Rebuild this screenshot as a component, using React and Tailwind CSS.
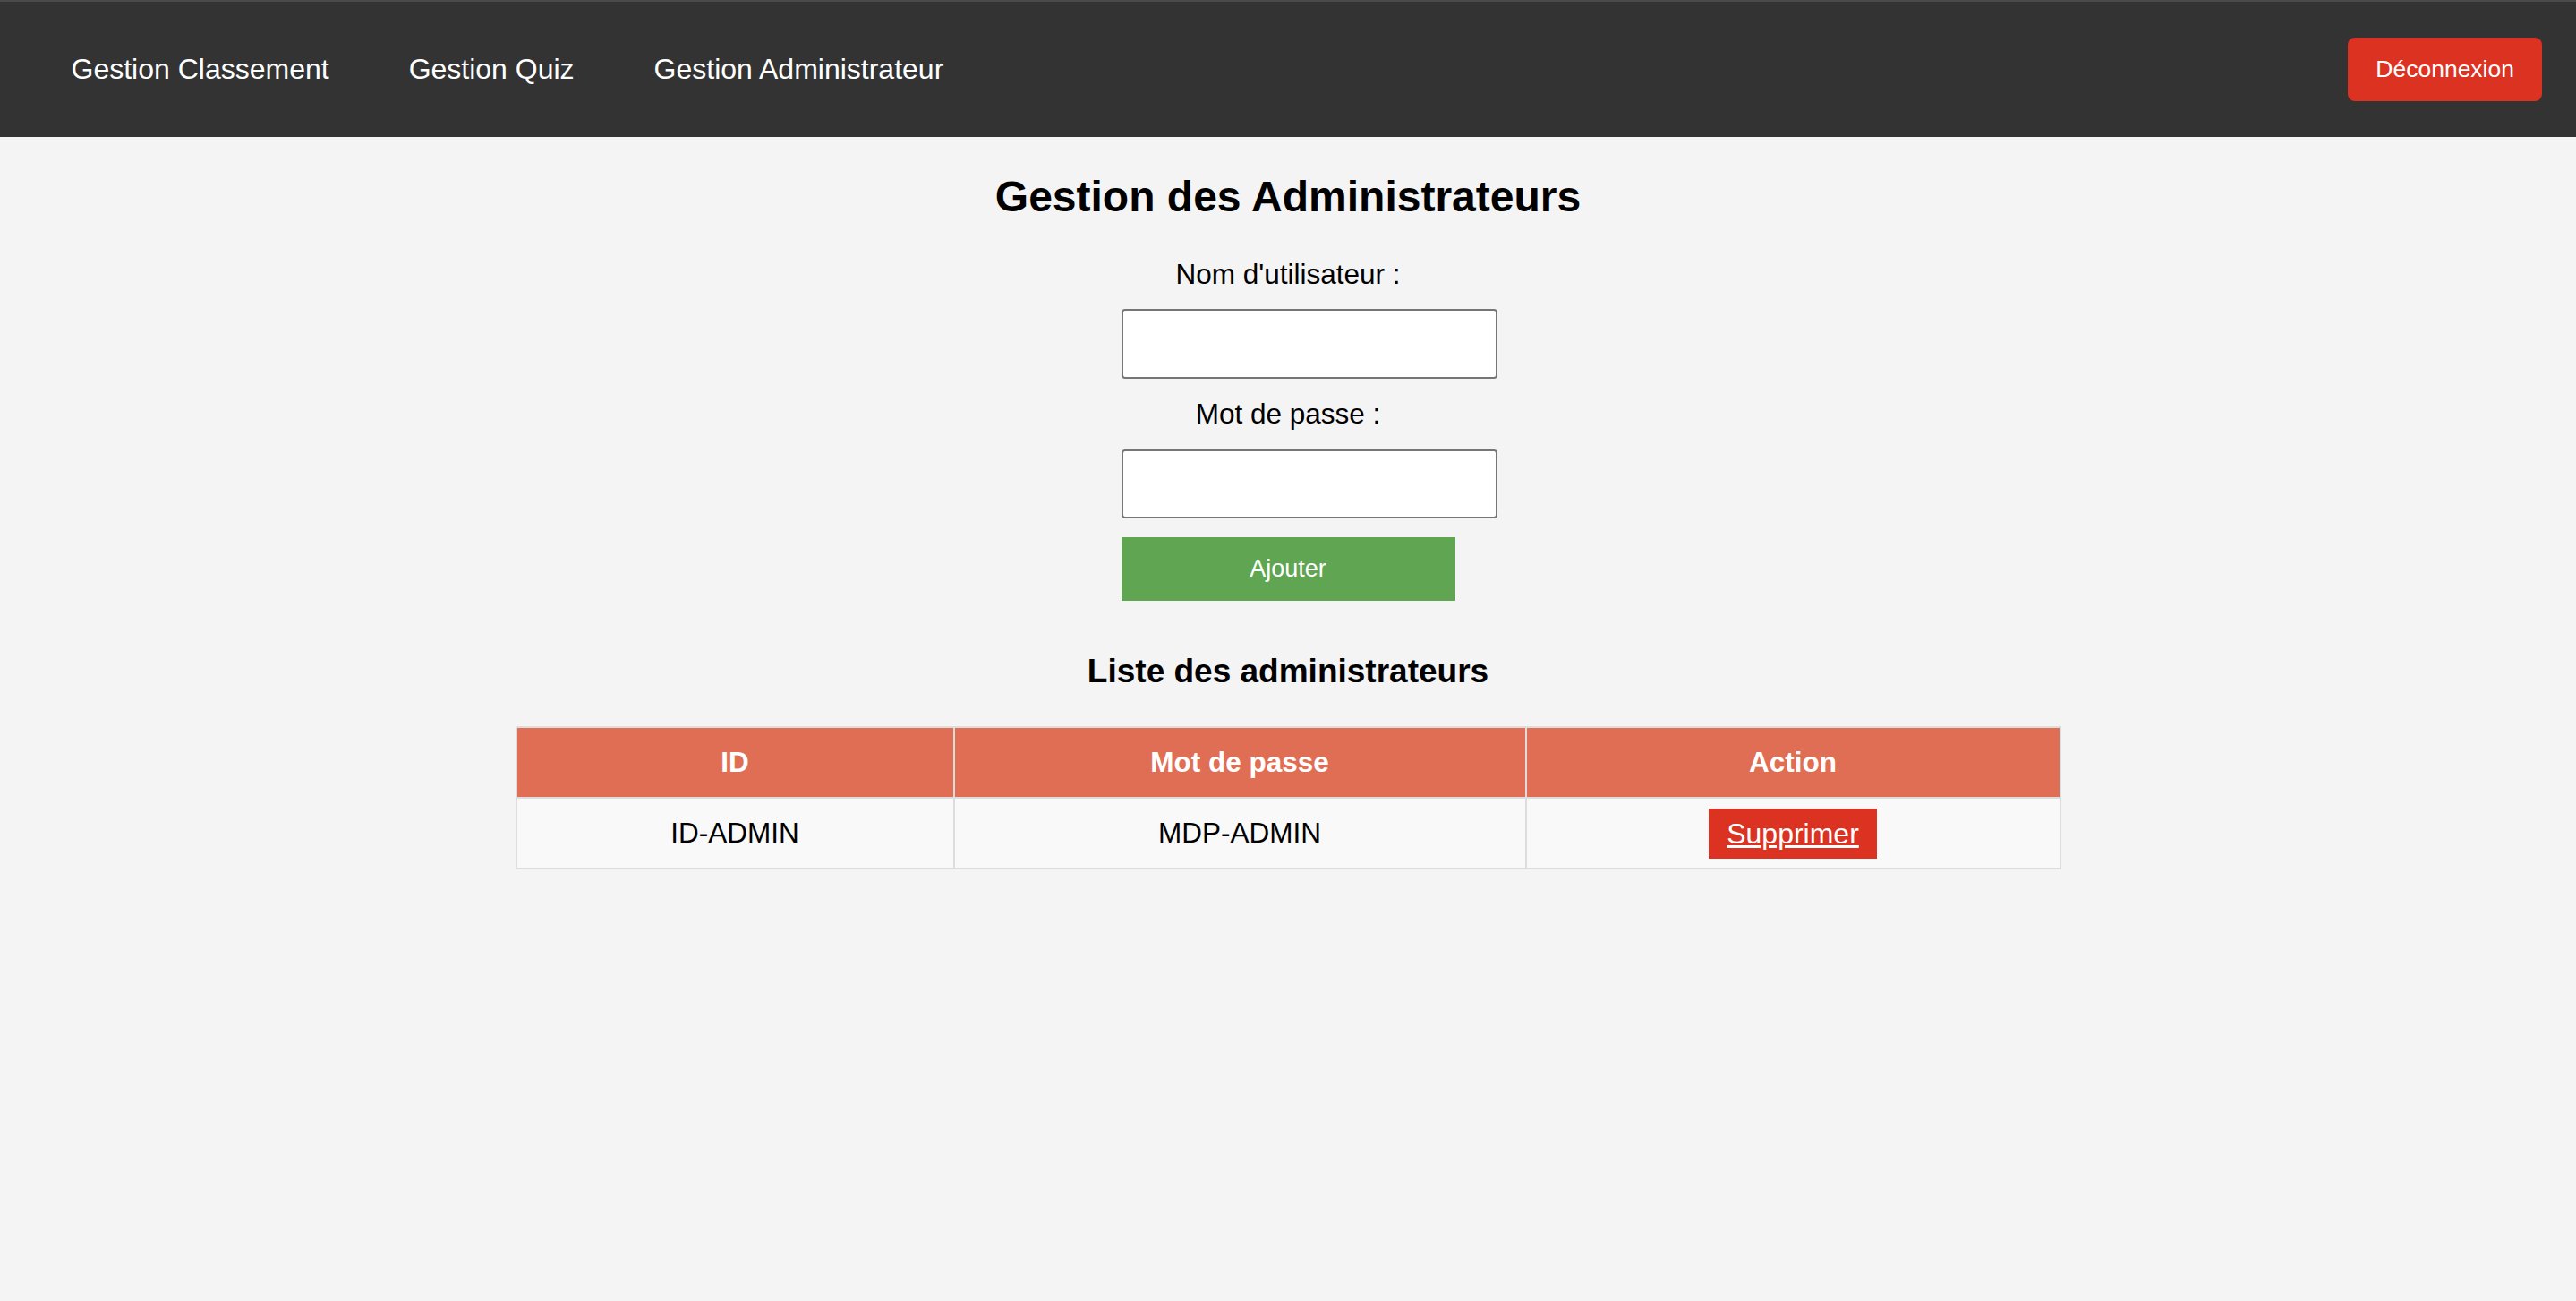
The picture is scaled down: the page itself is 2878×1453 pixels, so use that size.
import React from "react";

const font = { fontFamily: '"Liberation Sans", Arial, Helvetica, sans-serif' };

const navLinks = ["Gestion Classement", "Gestion Quiz", "Gestion Administrateur"];

const admins = [{ id: "ID-ADMIN", mdp: "MDP-ADMIN" }];

function NavBar() {
  return (
    <nav className="flex items-center justify-between bg-[#333333] border-t-2 border-[#4a4a4a] h-[153px] pl-[35px] pr-[38px]">
      <ul className="flex items-center">
        {navLinks.map((l) => (
          <li key={l}>
            <a href="#" className="block px-[44.5px] text-[32px] leading-[37px] text-white">
              {l}
            </a>
          </li>
        ))}
      </ul>
      <button className="bg-[#dc3222] text-white text-[26.5px] leading-[31px] px-[31px] py-[20px] rounded-[8px]">
        Déconnexion
      </button>
    </nav>
  );
}

function AdminForm() {
  return (
    <div className="flex flex-col items-center">
      <h2 className="text-[48px] leading-[56px] font-bold text-black">Gestion des Administrateurs</h2>

      <div className="w-[373px] flex flex-col items-center mt-[40px]">
        <label className="text-[31.5px] leading-[36px] text-black">Nom d'utilisateur :</label>
        <input
          type="text"
          className="self-start mt-[21px] w-[420px] h-[78px] bg-white border-2 border-[#767676] rounded-[4px] shrink-0"
        />
        <label className="mt-[21px] text-[31.5px] leading-[36px] text-black">Mot de passe :</label>
        <input
          type="password"
          className="self-start mt-[22px] w-[420px] h-[77px] bg-white border-2 border-[#767676] rounded-[4px] shrink-0"
        />
        <button className="mt-[21px] w-[373px] h-[71px] bg-[#5fa552] text-white text-[27px]">Ajouter</button>
      </div>
    </div>
  );
}

function AdminTable() {
  return (
    <div className="flex flex-col items-center mt-[57px]">
      <h3 className="text-[37px] leading-[43px] font-bold text-black">Liste des administrateurs</h3>
      <table className="mt-[40px] w-[1727px] border-collapse border-2 border-[#dddddd]">
        <thead>
          <tr className="bg-[#e06e55] text-white">
            <th className="w-[489px] h-[79px] border-2 border-[#dddddd] text-[31.5px] font-bold">ID</th>
            <th className="w-[639px] h-[79px] border-2 border-[#dddddd] text-[31.5px] font-bold">Mot de passe</th>
            <th className="h-[79px] border-2 border-[#dddddd] text-[31.5px] font-bold">Action</th>
          </tr>
        </thead>
        <tbody>
          {admins.map((a) => (
            <tr key={a.id} className="bg-[#f9f9f9]">
              <td className="h-[79px] border-2 border-[#dddddd] text-center text-[31.5px] text-black">{a.id}</td>
              <td className="h-[79px] border-2 border-[#dddddd] text-center text-[31.5px] text-black">{a.mdp}</td>
              <td className="h-[79px] border-2 border-[#dddddd] text-center">
                <a href="#" className="inline-block bg-[#dc3222] text-white underline text-[32px] leading-[36px] px-[20px] py-[10px]">
                  Supprimer
                </a>
              </td>
            </tr>
          ))}
        </tbody>
      </table>
    </div>
  );
}

export default function App() {
  return (
    <div className="min-h-screen bg-[#f4f4f4]" style={font}>
      <NavBar />
      <main className="pt-[39px] pb-[40px]">
        <AdminForm />
        <AdminTable />
      </main>
    </div>
  );
}
